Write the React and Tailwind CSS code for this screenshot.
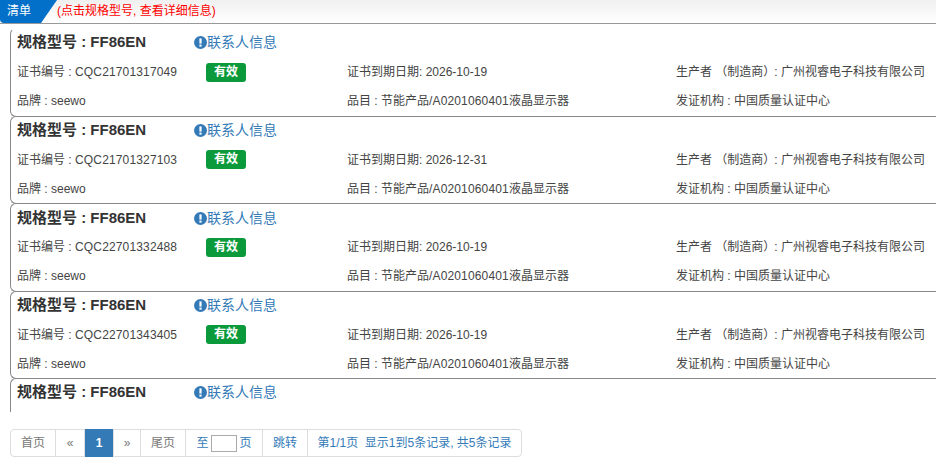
const rows = [
  { cert: "CQC21701317049", date: "2026-10-19" },
  { cert: "CQC21701327103", date: "2026-12-31" },
  { cert: "CQC22701332488", date: "2026-10-19" },
  { cert: "CQC22701343405", date: "2026-10-19" },
];

const Title = ({ className = "" }) => (
  <div className={`flex items-center h-[20px] ${className}`}>
    <div className="w-[177px] text-[15px] font-bold text-[#333]">规格型号 : FF86EN</div>
    <div className="flex items-center text-[14px] text-[#337ab7]">
      <svg width="13" height="13" viewBox="0 0 13 13">
        <circle cx="6.5" cy="6.5" r="6.5" fill="#337ab7" />
        <rect x="5.4" y="2.4" width="2.2" height="5.2" fill="#fff" />
        <rect x="5.4" y="8.6" width="2.2" height="2" fill="#fff" />
      </svg>
      <span>联系人信息</span>
    </div>
  </div>
);

const Card = ({ cert, date }) => (
  <div className="group border-t border-l border-b border-[#888] first:border-t-transparent rounded-l-[6px] -mt-px h-[88.5px] pl-[6px] pt-[4px] text-[12px] text-[#444]">
    <Title className="group-first:-mt-px" />
    <div className="flex items-center mt-[9px] group-first:mt-[10px] h-[20px]">
      <div className="w-[189px]">
        证书编号 : <span className="tracking-[0.15px]">{cert}</span>
      </div>
      <div className="w-[141px]">
        <span className="inline-block w-[40px] h-[19px] leading-[19px] text-center bg-[#0a9a3c] text-white font-bold rounded-[3px]">有效</span>
      </div>
      <div className="w-[329px]">证书到期日期: {date}</div>
      <div>生产者 （制造商）<span className="-ml-px">:</span> 广州视睿电子科技有限公司</div>
    </div>
    <div className="flex items-center mt-[9px] h-[20px]">
      <div className="w-[330px]">品牌 : seewo</div>
      <div className="w-[329px]">
        品目 : 节能产品<span className="tracking-[0.15px]">/A0201060401</span>液晶显示器
      </div>
      <div>发证机构 : 中国质量认证中心</div>
    </div>
  </div>
);

const Page = ({ children, className = "" }) => (
  <div className={`h-[26px] flex items-center justify-center border-l border-[#ddd] first:border-l-0 ${className}`}>{children}</div>
);

export default function App() {
  return (
    <div className="w-[936px] h-[462px] overflow-hidden bg-white font-['Liberation_Sans','Noto_Sans_CJK_SC',sans-serif]">
      <div className="h-[24px] flex items-stretch border-b border-[#999] bg-gradient-to-b from-[#f0f0f0] to-white">
        <div className="w-[57px] h-[23px] flex items-center pl-[7px] pb-[2px] text-[12px] text-white bg-[#0270c9] rounded-bl-[4px] [clip-path:polygon(0_0,100%_0,72%_100%,0_100%)]">清单</div>
        <div className="flex items-center pb-[2px] text-[12px] text-[#f00]">(点击规格型号, 查看详细信息)</div>
      </div>
      <div className="pl-[10px] pt-[5px]">
        {rows.map((r) => (
          <Card key={r.cert} {...r} />
        ))}
        <div className="border-l border-t border-[#888] rounded-tl-[6px] -mt-px h-[34px] pl-[6px] pt-[3px]">
          <Title />
        </div>
      </div>
      <div className="ml-[10px] mt-[17px] inline-flex border border-[#ddd] rounded-[4px] text-[12px] text-[#337ab7]">
        <Page className="w-[44px] text-[#777]">首页</Page>
        <Page className="w-[29px] text-[#777]">«</Page>
        <Page className="w-[29px] h-[28px] -my-px bg-[#337ab7] border-[#337ab7] text-white font-bold">1</Page>
        <Page className="w-[27px] text-[#777]">»</Page>
        <Page className="w-[45px] text-[#777]">尾页</Page>
        <Page className="w-[77px]">
          至<span className="inline-block w-[26px] h-[17px] ml-[2px] mr-[3px] border border-[#aaa]" />页
        </Page>
        <Page className="w-[45px]">跳转</Page>
        <Page className="w-[214px]">第1/1页&nbsp; 显示1到5条记录, 共5条记录</Page>
      </div>
    </div>
  );
}
